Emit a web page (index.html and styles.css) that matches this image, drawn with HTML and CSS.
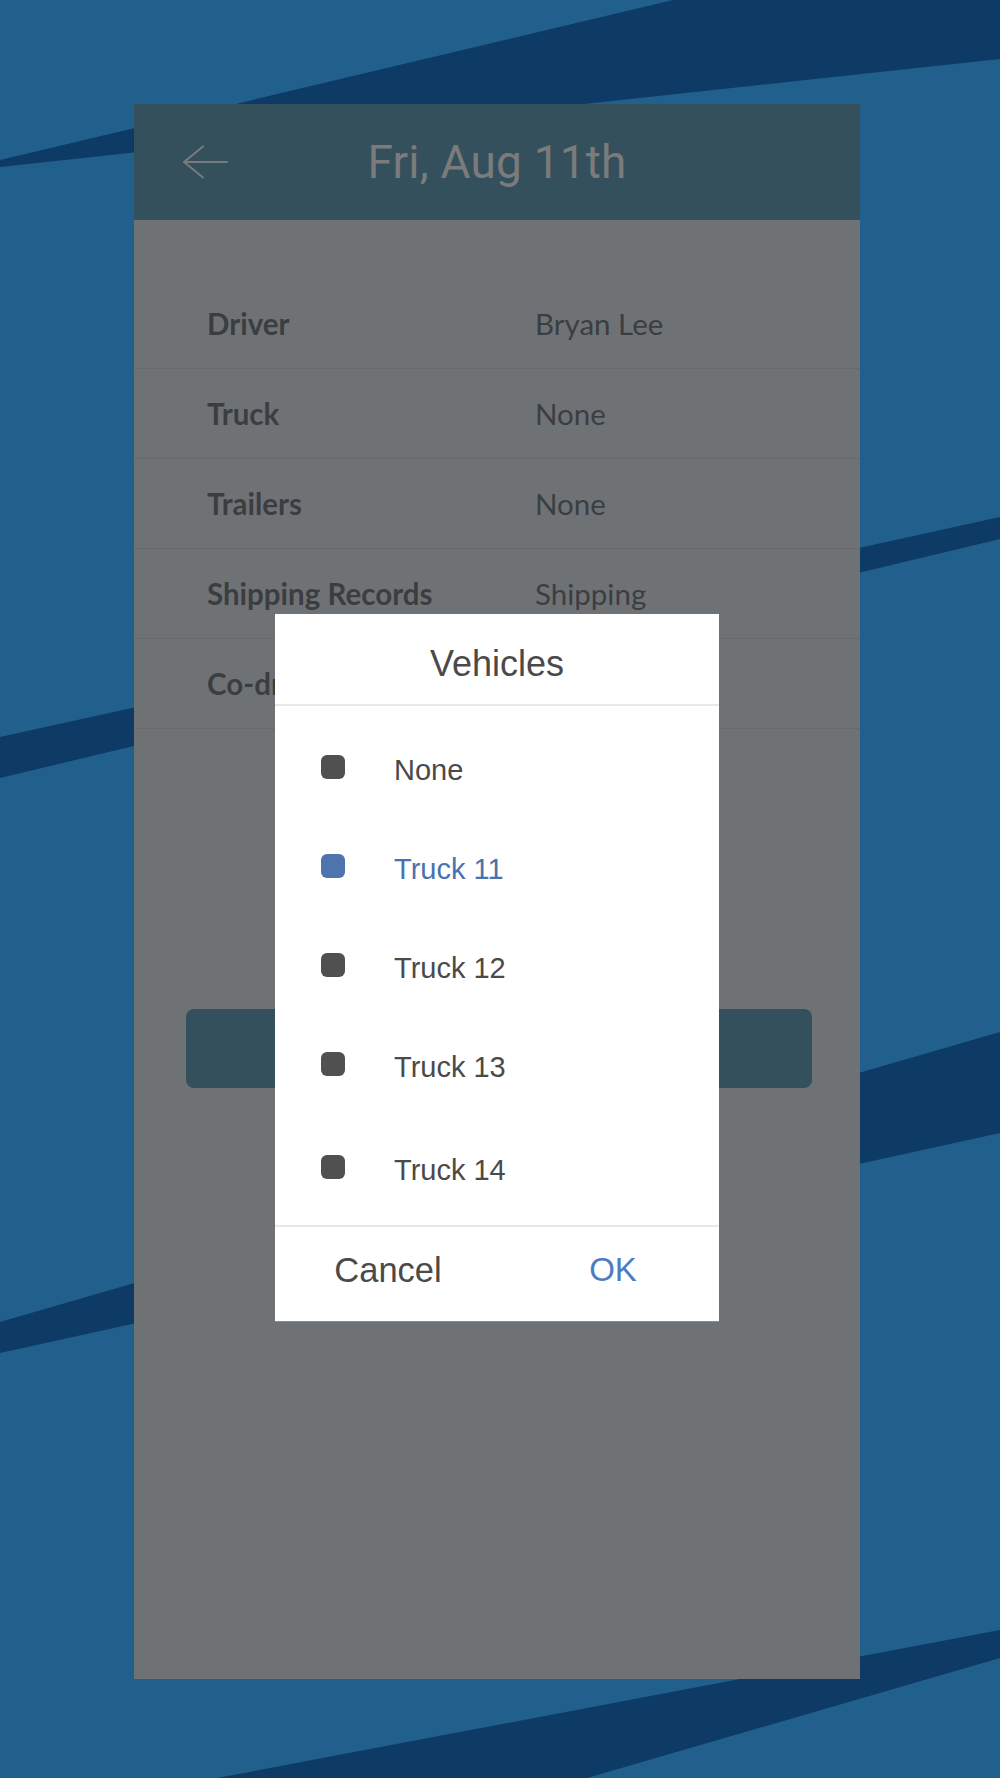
FILE: index.html
```html
<!DOCTYPE html>
<html lang="en">
<head>
<meta charset="utf-8">
<title>Fri, Aug 11th</title>
<link rel="stylesheet" href="styles.css">
</head>
<body>
<div class="scene">
  <svg class="backdrop" viewBox="0 0 1000 1778" width="1000" height="1778" aria-hidden="true">
    <rect x="0" y="0" width="1000" height="1778" fill="#215f8d"/>
    <polygon points="673,0 1000,0 1000,59 0,167 0,160" fill="#0e3a66"/>
    <polygon points="0,737 1000,517 1000,539 0,778" fill="#0e3a66"/>
    <polygon points="0,1322 1000,1032 1000,1133 0,1353" fill="#0e3a66"/>
    <polygon points="217,1778 1000,1630 1000,1658 587,1778" fill="#0e3a66"/>
  </svg>

  <div class="phone">
    <header class="topbar">
      <svg class="back" viewBox="0 0 46 34" width="46" height="34" aria-hidden="true">
        <path d="M45 17 H2 M2 17 L21 1.5 M2 17 L21 32.5" fill="none" stroke="#7b7b7b" stroke-width="2" stroke-linecap="round" stroke-linejoin="round"/>
      </svg>
      <h1 class="title">Fri, Aug 11th</h1>
      <span class="spacer"></span>
    </header>

    <main class="content">
      <dl class="rows">
        <div class="row"><dt>Driver</dt><dd>Bryan Lee</dd></div>
        <div class="row"><dt>Truck</dt><dd>None</dd></div>
        <div class="row"><dt>Trailers</dt><dd>None</dd></div>
        <div class="row"><dt>Shipping Records</dt><dd>Shipping</dd></div>
        <div class="row"><dt>Co-driver</dt><dd></dd></div>
      </dl>
      <div class="save-btn"></div>
    </main>

    <div class="dialog" role="dialog">
      <div class="dialog-title">Vehicles</div>
      <ul class="options">
        <li class="option"><span class="dot"></span><span class="label">None</span></li>
        <li class="option selected"><span class="dot"></span><span class="label">Truck 11</span></li>
        <li class="option"><span class="dot"></span><span class="label">Truck 12</span></li>
        <li class="option"><span class="dot"></span><span class="label">Truck 13</span></li>
        <li class="option last"><span class="dot"></span><span class="label">Truck 14</span></li>
      </ul>
      <div class="dialog-actions">
        <span class="action cancel">Cancel</span>
        <span class="action ok">OK</span>
      </div>
    </div>
  </div>
</div>
</body>
</html>
```

FILE: styles.css
```css
html, body {
  margin: 0;
  padding: 0;
  height: 1778px;
  overflow: hidden;
}

body {
  background: #215f8d;
  font-family: "Liberation Sans", Arial, sans-serif;
}

.scene {
  position: relative;
  width: 1000px;
  height: 1778px;
  padding-top: 104px;
  box-sizing: border-box;
}

.backdrop {
  position: absolute;
  left: 0;
  top: 0;
  display: block;
}

.phone {
  position: relative;
  margin-left: 134px;
  width: 726px;
  height: 1575px;
  background: #6f7275;
}

.topbar {
  height: 116px;
  background: #34505c;
  display: grid;
  grid-template-columns: 1fr auto 1fr;
  align-items: center;
}

.back {
  display: block;
  margin-left: 48px;
}

.title {
  margin: 0;
  font-family: Roboto, "Liberation Sans", sans-serif;
  font-weight: 400;
  font-size: 46px;
  color: #7b7b7b;
  letter-spacing: 0.2px;
}

.content {
  display: block;
}

.rows {
  margin: 0;
  padding-top: 59px;
}

.row {
  display: flex;
  align-items: center;
  height: 89px;
  border-bottom: 1px solid #67696c;
  font-family: Lato, "Liberation Sans", sans-serif;
  font-size: 29.5px;
  color: #3b3e41;
}

.row dt {
  box-sizing: border-box;
  width: 401px;
  padding-left: 73px;
  font-weight: 700;
  white-space: nowrap;
}

.row dd {
  margin: 0;
  font-weight: 400;
}

.save-btn {
  margin: 280px 48px 0 52px;
  height: 79px;
  border-radius: 8px;
  background: #34505c;
}

.dialog {
  position: absolute;
  left: 141px;
  top: 510px;
  width: 444px;
  height: 707px;
  background: #ffffff;
  display: flex;
  flex-direction: column;
  box-shadow: 0 1px 0 #8a8c8e;
}

.dialog-title {
  height: 92px;
  box-sizing: border-box;
  padding-top: 10px;
  display: flex;
  align-items: center;
  justify-content: center;
  font-size: 36px;
  color: #4a4a4a;
  border-bottom: 2px solid #e8e8e8;
}

.options {
  list-style: none;
  margin: 0;
  padding: 13px 0 8px;
}

.option {
  height: 99px;
  display: flex;
  align-items: center;
  padding-left: 46px;
  gap: 49px;
  font-size: 29px;
  color: #4a4a4a;
}

.option.last {
  height: 102px;
  padding-top: 5px;
  box-sizing: border-box;
}

.dot {
  width: 24px;
  height: 24px;
  border-radius: 6px;
  background: #505050;
  margin-bottom: 4px;
  flex: none;
}

.label {
  margin-top: 4px;
}

.option.selected {
  color: #4a72ae;
}

.option.selected .dot {
  background: #4f74ad;
}

.dialog-actions {
  flex: 1;
  border-top: 2px solid #e8e8e8;
  display: grid;
  grid-template-columns: 1fr 1fr;
  align-items: center;
  padding-bottom: 8px;
}

.action {
  text-align: center;
}

.cancel {
  color: #4a4a4a;
  font-size: 34.5px;
  padding-left: 4px;
}

.ok {
  color: #4f7bbf;
  font-size: 33px;
  padding-left: 10px;
}
```
